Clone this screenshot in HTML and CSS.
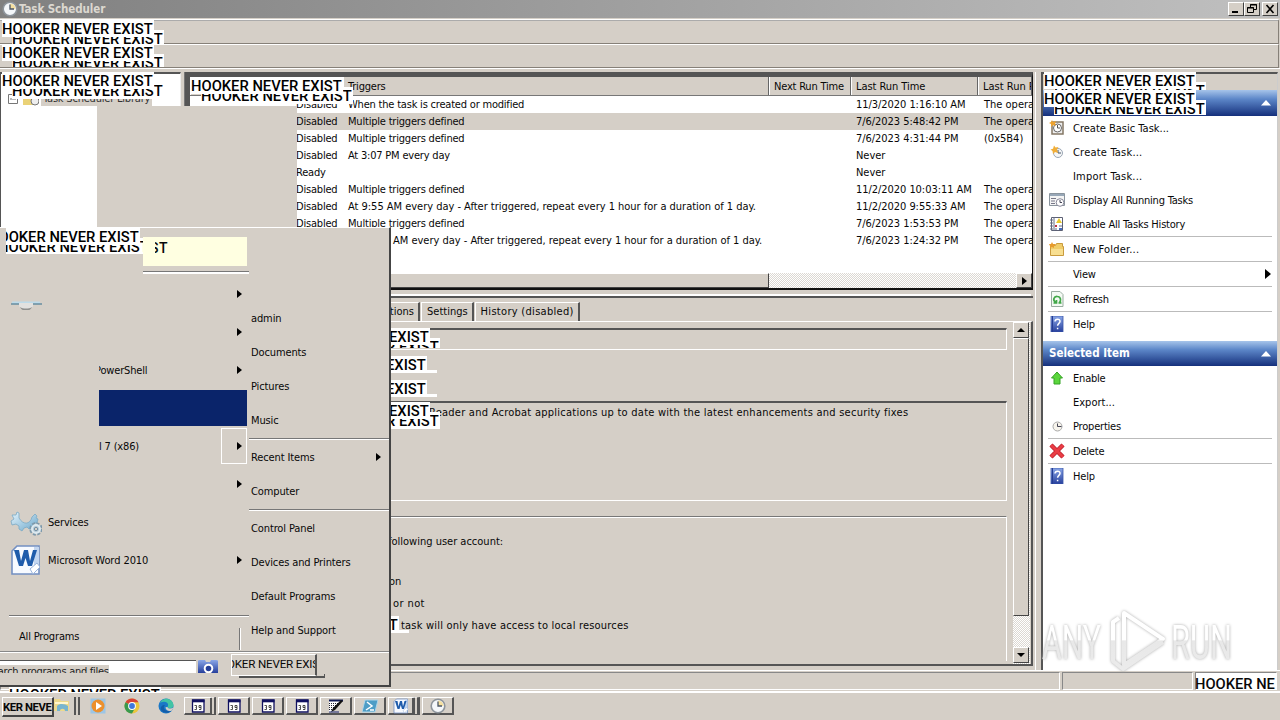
FILE: index.html
```html
<!DOCTYPE html>
<html lang="en">
<head>
<meta charset="utf-8">
<title>Task Scheduler</title>
<link rel="stylesheet" href="styles.css">
</head>
<body>
<svg class="defs" width="0" height="0">
  <defs>
    <linearGradient id="blue" x1="0" y1="0" x2="0" y2="1"><stop offset="0" stop-color="#8aa7e8"/><stop offset="1" stop-color="#263f9c"/></linearGradient>
    <linearGradient id="sky" x1="0" y1="0" x2="1" y2="1"><stop offset="0" stop-color="#e6f5fd"/><stop offset="1" stop-color="#6aa6ca"/></linearGradient>
    <symbol id="clock" viewBox="0 0 16 16"><circle cx="8" cy="8" r="6.8" fill="#f4f7fa" stroke="#8d949b" stroke-width="1.600"/><path d="M8 8V2.500A5.500 5.500 0 0 1 13.500 8z" fill="#f4dfa0"/><path d="M8 3.500V8h4" fill="none" stroke="#4b5665" stroke-width="1.300"/></symbol>
    <symbol id="help" viewBox="0 0 16 16"><path d="M2 0h12v16H2z" fill="url(#blue)" stroke="#3a55a8" stroke-width=".8"/><path d="M3.500 0v16" stroke="#243c91"/><path d="M6 5.500c.2-3.200 5.300-3 5 0-.1 1.800-2.400 2-2.400 4.200M8.600 11.700v1.600" fill="none" stroke="#fff" stroke-width="1.500"/></symbol>
    <symbol id="app" viewBox="0 0 16 16"><path d="M2.500 2h11.500v12H2.500z" fill="#fff" stroke="#101060" stroke-width="1.300"/><path d="M2 3h12.500" stroke="#101060" stroke-width="2.600"/><path d="M4.500 7.500h2v2h-1M6.500 9.500v2h-2M11 9.500H9v-2h2v4H9" fill="none" stroke="#222" stroke-width=".8"/></symbol>
    <symbol id="word" viewBox="0 0 32 32"><path d="M7 2h22v28H2V7z" fill="#f7faff" stroke="#7390c2" stroke-width="1.600"/><path d="M24 3h5v20l-5 5z" fill="#c3d6f0"/><path d="M4 6h5l2 11 3-11h4l2 11 3-11h4l-5 16h-4l-2.500-8-2.500 8H9z" fill="#1f5cab"/><path d="M20 25l7-6 3 4-7 7z" fill="#fff" stroke="#9bb5dc"/></symbol>
    <symbol id="tri" viewBox="0 0 5 8"><path d="M0 0l5 4-5 4z"/></symbol>
  </defs>
</svg>
<div class="desktop">
  <header class="titlebar">
    <svg class="i16"><use href="#clock"/></svg><span class="title">Task Scheduler</span>
    <div class="winbtns">
      <b class="wb"><svg viewBox="0 0 14 12"><path d="M3 9h6" stroke="#000" stroke-width="2"/></svg></b><b class="wb"><svg viewBox="0 0 14 12"><path d="M5.500 4V1.500h6v5H9M5 2h7M2.500 4.500h6v5h-6zM2 5h7" fill="none" stroke="#000"/></svg></b><b class="wb close"><svg viewBox="0 0 14 12"><path d="M3.500 2l7 8M10.500 2l-7 8" stroke="#000" stroke-width="1.600"/></svg></b>
    </div>
  </header>
  <div class="bar bar1"></div>
  <div class="bar"></div>

  <main class="panes">
    <section class="tree"><svg class="i16 expander" viewBox="0 0 16 16"><path d="M3.500 3.500h9v9h-9zM5 8h6" fill="#fff" stroke="#777"/></svg><svg class="i16" viewBox="0 0 16 16"><path d="M0 4h6l1 2h7v8H0z" fill="#ead277"/><circle cx="12" cy="10" r="4" fill="#eee" stroke="#777"/></svg><span class="node">Task Scheduler Library</span></section>
    <section class="center">
      <div class="list">
        <div class="row head"><span></span><span>Triggers</span><span>Next Run Time</span><span>Last Run Time</span><span>Last Run Result</span></div>
        <div class="row"><span>Disabled</span><span>When the task is created or modified</span><span></span><span>11/3/2020 1:16:10 AM</span><span>The opera</span></div>
        <div class="row sel"><span>Disabled</span><span>Multiple triggers defined</span><span></span><span>7/6/2023 5:48:42 PM</span><span>The opera</span></div>
        <div class="row"><span>Disabled</span><span>Multiple triggers defined</span><span></span><span>7/6/2023 4:31:44 PM</span><span>(0x5B4)</span></div>
        <div class="row"><span>Disabled</span><span>At 3:07 PM every day</span><span></span><span>Never</span><span></span></div>
        <div class="row"><span>Ready</span><span></span><span></span><span>Never</span><span></span></div>
        <div class="row"><span>Disabled</span><span>Multiple triggers defined</span><span></span><span>11/2/2020 10:03:11 AM</span><span>The opera</span></div>
        <div class="row"><span>Disabled</span><span class="long">At 9:55 AM every day - After triggered, repeat every 1 hour for a duration of 1 day.</span><span></span><span>11/2/2020 9:55:33 AM</span><span>The opera</span></div>
        <div class="row"><span>Disabled</span><span>Multiple triggers defined</span><span></span><span>7/6/2023 1:53:53 PM</span><span>The opera</span></div>
        <div class="row"><span></span><span class="long">At 12:24 AM every day - After triggered, repeat every 1 hour for a duration of 1 day.</span><span></span><span>7/6/2023 1:24:32 PM</span><span>The opera</span></div>
        <div class="hscroll"><i class="thumb"></i><b class="sb"><svg viewBox="0 0 14 14"><path d="M5 3l5 4-5 4z"/></svg></b></div>
      </div>
      <div class="detail">
        <div class="tabs"><span class="tab t1">Actions</span><span class="tab">Settings</span><span class="tab t3">History (disabled)</span></div>
        <div class="sheet">
          <div class="groups">
            <div class="group g1"></div>
            <div class="group g2">Reader and Acrobat applications up to date with the latest enhancements and security fixes</div>
            <div class="group g3"><p class="acct">following user account:</p><p class="on">on</p><p class="not">or not</p><p class="task">task will only have access to local resources</p></div>
          </div>
          <div class="vscroll"><b class="sb"><svg viewBox="0 0 14 14"><path d="M3 9l4-4 4 4z"/></svg></b><i class="thumb"></i><b class="sb"><svg viewBox="0 0 14 14"><path d="M3 5l4 4 4-4z"/></svg></b></div>
        </div>
      </div>
    </section>
    <aside class="actions">
      <div class="sechead first"><span></span><svg viewBox="0 0 10 6"><path d="M0 5.500L5 0l5 5.500z" fill="#fff"/></svg></div>
      <div class="act dots"><svg class="i16" viewBox="0 0 16 16"><path d="M3 2h11v12H3z" fill="#eee" stroke="#857865" stroke-width="1.500"/><circle cx="8.500" cy="8" r="4" fill="#fff" stroke="#666"/><path d="M8.500 5v3h2.500" fill="none" stroke="#555"/><path d="M3 0l1 2 3-1-1 3 1 2-3-1-2 2 0-3-2-1 2-1z" fill="#eda22e"/></svg>Create Basic Task...</div>
      <div class="act dots wider"><svg class="i16" viewBox="0 0 16 16"><circle cx="9" cy="9" r="4.500" fill="#f5f6f7" stroke="#9aa6b4"/><path d="M9 6v3h3" fill="none" stroke="#456"/><path d="M5 1.500l1.500 2 3-.5-1.500 2.500L9 9 6 8 4 10 3.500 7 1.500 5.500l2.500-.8z" fill="#f1ae37"/></svg>Create Task...</div>
      <div class="act dots wider"><i class="i16"></i>Import Task...</div>
      <div class="act"><svg class="i16" viewBox="0 0 16 16"><path d="M.5 1.500h15v12H.5z" fill="#f4f4f4" stroke="#8a949d"/><path d="M1 3h14" stroke="#98a8b8" stroke-width="2"/><path d="M2 6.500h5M2 9h4M2 11.500h4" stroke="#778"/><circle cx="11" cy="10.500" r="3.800" fill="#fff" stroke="#889"/><path d="M11 8v2.500h2" fill="none" stroke="#445"/></svg>Display All Running Tasks</div>
      <div class="act"><svg class="i16" viewBox="0 0 16 16"><path d="M2.500 1.500h11v13h-11z" fill="#fff" stroke="#5c6074"/><path d="M5 1v14M1 4h3M1 7h3M1 10h3M1 13h3M6 10h2M10 10h3M6 13h2" stroke="#626c83"/><path d="M7 7l3-5 3 5z" fill="#e8c92d"/><path d="M6 9h2v2H6z" fill="#be3545"/><path d="M10 12h3v2h-3z" fill="#456abd"/></svg>Enable All Tasks History</div>
      <hr>
      <div class="act dots wider"><svg class="i16" viewBox="0 0 16 16"><path d="M1.500 4.500h5l1-2h6v3h1v9h-13z" fill="#f0cd6a" stroke="#c99b3e"/><path d="M2 8h12v6H2z" fill="#f8df91"/><path d="M3 1l1 2 3 0-2 2 0 2-2-1-2 1V5L0 3h2z" fill="#e79b2d"/></svg>New Folder...</div>
      <hr>
      <div class="act"><i class="i16"></i>View<svg class="more" viewBox="0 0 6 10"><path d="M0 0l6 5-6 5z"/></svg></div>
      <hr>
      <div class="act"><svg class="i16" viewBox="0 0 16 16"><path d="M2.500 .5h8.500l3 3v12H2.500z" fill="#f4faf4" stroke="#9aaca1"/><path d="M4.500 12h3V9M7 11.500c-4-2-2-6.500 1.500-6 3.500.3 4 4.500 1.500 6.500M9.500 12h3" fill="none" stroke="#42a849" stroke-width="1.700"/></svg>Refresh</div>
      <hr>
      <div class="act"><svg class="i16"><use href="#help"/></svg>Help</div>
      <div class="sechead second"><span>Selected Item</span><svg viewBox="0 0 10 6"><path d="M0 5.500L5 0l5 5.500z" fill="#fff"/></svg></div>
      <div class="act"><svg class="i16" viewBox="0 0 16 16"><path d="M8 2l5.500 6H11v6H5V8H2.500z" fill="#5bd63c" stroke="#35a324"/></svg>Enable</div>
      <div class="act dots"><i class="i16"></i>Export...</div>
      <div class="act"><svg class="i16" viewBox="0 0 16 16"><circle cx="8.500" cy="8.500" r="4.500" fill="#f7f4ec" stroke="#a9a9a9"/><path d="M8.500 5.500v3h4" fill="none" stroke="#445"/></svg>Properties</div>
      <hr>
      <div class="act"><svg class="i16" viewBox="0 0 16 16"><path d="M2 2l12 12M14 2L2 14" stroke="#b8202c" stroke-width="4.500"/><path d="M2 2l12 12M14 2L2 14" stroke="#ea3d45" stroke-width="3"/></svg>Delete</div>
      <hr>
      <div class="act"><svg class="i16"><use href="#help"/></svg>Help</div>
    </aside>
  </main>

  <footer class="status"><i class="s1"></i><i class="s2"></i><i class="s3">HOOKER NE</i></footer>

  <nav class="taskbar">
    <div class="startbtn"><span>KER NEVE</span></div>
    <div class="tb explorer"><svg class="i16" viewBox="0 0 16 16"><path d="M0 2h6l1 2h8v10H0z" fill="#ecd98c"/><path d="M1 5h13v2H1z" fill="#fff7cf"/><path d="M3 9c3-3 8-2 11 0v5h-3c0-3-5-3-5 0H3z" fill="#77b5cf"/></svg></div>
    <div class="tb flat media"><svg class="i16" viewBox="0 0 16 16"><rect x=".5" y=".5" width="15" height="15" fill="#9cc5e5"/><circle cx="8" cy="8" r="6.500" fill="#ec902d"/><path d="M6 4l6 4-6 4z" fill="#fff"/></svg></div>
    <div class="tb flat"><svg class="i16" viewBox="0 0 16 16"><circle cx="8" cy="8" r="7.500" fill="#eac63e"/><path d="M8 8L1.500 4.200A7.500 7.500 0 0 1 14.500 4.200H8z" fill="#d84437"/><path d="M8 8L1.500 4.200A7.500 7.500 0 0 0 8 15.500L11 10z" fill="#38994e"/><circle cx="8" cy="8" r="3.900" fill="#fff"/><circle cx="8" cy="8" r="2.900" fill="#3f78dc"/></svg></div>
    <div class="tb flat"><svg class="i16" viewBox="0 0 16 16"><circle cx="8" cy="8" r="7.500" fill="#1a78c7"/><path d="M2 5C5-2 15 0 15.500 7c0 4-5 4-6 2 1-2 1-4-2-5-2-.5-4 0-5.500 1z" fill="#43c4a4"/><path d="M9.500 9c.5 2 4 2 5.800.500-.3 1.500-1 2.500-1.800 3.200-3 1-6-.5-6-3.500z" fill="#d5cfc7"/><path d="M7 7c-3 3 0 7 6 6-3 3-8 2-10-1-1-3 1-5 4-5z" fill="#145da8"/></svg></div>
    <div class="tb multi"><svg class="i16"><use href="#app"/></svg></div>
    <div class="tb"><svg class="i16"><use href="#app"/></svg></div>
    <div class="tb"><svg class="i16"><use href="#app"/></svg></div>
    <div class="tb"><svg class="i16"><use href="#app"/></svg></div>
    <div class="tb"><svg class="i16" viewBox="0 0 16 16"><path d="M1 2h14L3 14H1z" fill="#fff"/><path d="M1 2.500h14" stroke="#111a55" stroke-width="2"/><path d="M1 5.500h9M1 7.500h7M1 9.500h5M1 11.500h3" stroke="#223" stroke-dasharray="1 1"/><path d="M15 3L7 12l-4 2 2-4 8-8z" fill="#111"/><path d="M1 14h10" stroke="#18236c"/></svg></div>
    <div class="tb"><svg class="i16" viewBox="0 0 16 16"><path d="M3 2h13l-3 12H0z" fill="#4e9dc6" stroke="#b0d6e8"/><path d="M5 4l5 4-6 4M8 12h4" fill="none" stroke="#fff" stroke-width="1.500"/></svg></div>
    <div class="tb multi wordb"><svg class="i16"><use href="#word"/></svg></div>
    <div class="tb"><svg class="i16"><use href="#clock"/></svg></div>
  </nav>

  <div class="block"></div>
  <div class="tag a1"><i>HOOKER NEVER EXIST</i><b>HOOKER NEVER EXIST</b></div>
  <div class="tag a2"><i>HOOKER NEVER EXIST</i><b>HOOKER NEVER EXIST</b></div>
  <div class="tag a3"><i>HOOKER NEVER EXIST</i><b>HOOKER NEVER EXIST</b></div>
  <div class="tag a4"><i>HOOKER NEVER EXIST</i><b>HOOKER NEVER EXIST</b></div>
  <div class="tag a5"><i>HOOKER NEVER EXIST</i><b>HOOKER NEVER EXIST</b></div>
  <div class="tag a6"><i>HOOKER NEVER EXIST</i><b>HOOKER NEVER EXIST</b></div>
  <div class="tag d1"><i>HOOKER NEVER EXIST</i><b>HOOKER NEVER EXIST</b></div>
  <div class="tag d2"><i>HOOKER NEVER EXIST</i><b>HOOKER NEVER EXIST</b></div>
  <div class="tag d3"><i>HOOKER NEVER EXIST</i><b>HOOKER NEVER EXIST</b></div>
  <div class="tag d4"><i>HOOKER NEVER EXIST</i><b>HOOKER NEVER EXIST</b></div>
  <div class="tag d5"><i>HOOKER NEVER EXIST</i><b>HOOKER NEVER EXIST</b></div>
  <div class="tag low"><i>HOOKER NEVER EXIST</i></div>

  <svg class="mark" viewBox="0 0 200 70">
    <defs><linearGradient id="wm" gradientUnits="userSpaceOnUse" x1="0" y1="0" x2="0" y2="70"><stop offset="0" stop-color="#fff"/><stop offset=".48" stop-color="#fff"/><stop offset=".5" stop-color="#e8e8e8"/><stop offset="1" stop-color="#ececec"/></linearGradient></defs>
    <g class="glow"><text x="2" y="53" textLength="59" lengthAdjust="spacingAndGlyphs">ANY</text><text x="131" y="53" textLength="61" lengthAdjust="spacingAndGlyphs">RUN</text>
    <path d="M84 7l39 26-39 26zM79 12l-6 4v39l10 8 40-27" fill="none" stroke="url(#wm)" stroke-width="4" stroke-linejoin="round"/></g>
  </svg>

  <div class="start">
    <div class="cols">
      <div class="left">
        <div class="pinned"><div class="tag s"><i>HOOKER NEVER EXIST</i><b>HOOKER NEVER EXIST</b></div><div class="tip"><span>ST</span></div></div>
        <div class="item"><svg class="i32" viewBox="0 0 32 32"><path d="M2 24.500h28" stroke="#bddbea" stroke-width="2"/><path d="M1 26h31" stroke="#4a7d98" stroke-width="1.200"/><path d="M9 25h14v3c-2 5-12 5-14 0z" fill="#e2e1df"/><path d="M10 29c3 2 9 2 12 0-2 5-10 5-12 0z" fill="#8f8f8d"/></svg><svg class="arr"><use href="#tri"/></svg></div>
        <div class="item"><svg class="arr"><use href="#tri"/></svg></div>
        <div class="item"><span class="cut"><span>PowerShell</span></span><svg class="arr"><use href="#tri"/></svg></div>
        <div class="item"><div class="hl"></div></div>
        <div class="item"><span class="cut">l 7 (x86)</span><div class="split"></div><svg class="arr"><use href="#tri"/></svg></div>
        <div class="item"><svg class="arr"><use href="#tri"/></svg></div>
        <div class="item"><svg class="i32" viewBox="0 0 32 32"><path d="M2 9h4l1-3 2 1 0 5c4 7 11 7 13-1l3-3 2 2-1 2 2 1-1 4-3 0-1 3 0 3-4 0-2-2-3 1-2 3-3-2 0-3-3-2-4 1-1-4 3-2z" fill="url(#sky)" stroke="#7aa9c5" stroke-width=".8"/><circle cx="26" cy="23" r="5" fill="none" stroke="#7d99ab" stroke-width="3.500" stroke-dasharray="2.600 1.300"/><circle cx="26" cy="23" r="4" fill="#b8cbd6" stroke="#dce9f0" stroke-width="2"/><circle cx="26" cy="23" r="1.700" fill="#d5cfc7" stroke="#7390a5"/></svg>Services</div>
        <div class="item msword"><svg class="i32"><use href="#word"/></svg>Microsoft Word 2010<svg class="arr"><use href="#tri"/></svg></div>
        <div class="all">All Programs<i></i></div>
      </div>
      <div class="right">
        <p>admin</p><p>Documents</p><p>Pictures</p><p>Music</p><hr>
        <p>Recent Items<svg class="arr"><use href="#tri"/></svg></p><p>Computer</p><hr>
        <p>Control Panel</p><p>Devices and Printers</p><p>Default Programs</p><p>Help and Support</p>
      </div>
    </div>
    <div class="foot">
      <div class="search"><span>Search programs and files</span></div>
      <svg class="lens" viewBox="0 0 20 13"><path d="M0 1q0-1 2-1h5l1 2h4l1-2h5q2 0 2 1v12H0z" fill="url(#blue)"/><circle cx="10.500" cy="8.500" r="3.800" fill="#243e98" stroke="#fff" stroke-width="2"/></svg>
      <div class="shut"><span>HOOKER NEVER EXIST</span></div>
      <i class="shutedge"></i>
    </div>
  </div>
</div>
</body>
</html>
```
FILE: styles.css
```css
* { box-sizing: border-box; }
body { margin: 0; width: 1280px; height: 720px; overflow: hidden; font: 11px/13px "DejaVu Sans Condensed", "DejaVu Sans", sans-serif; color: #080808; background: #d5cfc7; }
p { margin: 0; }
.defs { position: absolute; }
.desktop { position: relative; width: 1280px; height: 720px; display: flex; flex-direction: column; overflow: hidden; background: #d5cfc7; }
.i16 { width: 16px; height: 16px; flex: none; }
.i32 { width: 32px; height: 32px; flex: none; }

.titlebar { height: 18px; display: flex; align-items: center; padding: 0 2px 0 2px; background: linear-gradient(90deg, #808080, #c0c0c0); }
.title { margin-left: 1px; font-weight: bold; font-size: 11.500px; letter-spacing: -.1px; color: #dcd8d0; }
.winbtns { margin-left: auto; display: flex; }
.wb { width: 16px; height: 14px; background: #d5cfc7; border: 1px solid #fff; border-right-color: #404040; border-bottom-color: #404040; display: flex; }
.wb svg { width: 14px; height: 12px; }
.close { margin-left: 2px; }
.bar { height: 24px; border-top: 1px solid #fff; border-bottom: 1px solid #868078; border-right: 1px solid #868078; margin-right: 1px; }
.bar1 { margin-top: 1px; height: 25px; border-top: 2px solid #fff; border-top-style: ridge; }

.panes { height: 603px; padding-top: 3px; display: flex; border-top: 1px solid #fff; }
.tree { width: 181px; background: #fff; border: solid #555; border-width: 2px 0 0 1px; border-right: 1px solid #eee; display: flex; align-items: flex-start; padding: 17px 0 0 4px; }
.tree .i16 { margin-right: 2px; }
.node { background: #d5cfc7; padding: 1px 2px; color: #333; letter-spacing: -.2px; }
.center { width: 852px; margin-left: 3px; border-left: 1px solid #777; display: flex; flex-direction: column; border-right: 1px solid #fff; }
.list { height: 218px; width: 848px; border: solid #555; border-width: 5px 1px 2px 5px; border-right-color: #111; border-bottom-color: #111; background: #fff; overflow: hidden; display: flex; flex-direction: column; }
.row { height: 17px; flex: none; display: grid; grid-template-columns: 153px 426px 82px 127px 54px; line-height: 17px; white-space: nowrap; letter-spacing: -.2px; }
.row span { overflow: hidden; padding-left: 5px; }
.row span:nth-child(4) { letter-spacing: -.05px; }
.row span:nth-child(5) { padding-left: 6px; letter-spacing: 0; }
.row span.long { letter-spacing: -.02px; }
.row span:first-child { padding-left: 106px; }
.row.head { height: 19px; background: #d5cfc7; border-bottom: 1px solid #777; line-height: 20px; }
.row.head span { padding-left: 4px; border-right: 1px solid #666; border-left: 1px solid #fff; }
.sel { background: #d5cfc7; }
.hscroll { margin-top: auto; height: 15px; display: flex; background: repeating-conic-gradient(#fff 0 25%, #dcd8d2 0 50%) 0 0/2px 2px; }
.thumb { background: #d5cfc7; border: 1px solid #fff; border-right-color: #444; border-bottom-color: #444; }
.hscroll .thumb { width: 579px; }
.sb { width: 16px; height: 16px; flex: none; background: #d5cfc7; border: 1px solid #fff; border-right-color: #444; border-bottom-color: #444; }
.sb svg { width: 14px; height: 14px; display: block; }
.hscroll .sb { margin-left: auto; height: 15px; }

.detail { margin-top: 6px; width: 848px; height: 370px; border-top: 2px solid #555; border-bottom: 2px solid #555; display: flex; flex-direction: column; box-shadow: 0 -4px 0 -2px #fff; }
.tabs { height: 23px; padding: 4px 0 0 178px; display: flex; }
.tab { height: 19px; line-height: 17px; border-top: 1px solid #fff; border-left: 1px solid #fff; border-right: 2px solid #555; padding: 0 4px 0 5px; margin-right: 1px; white-space: nowrap; }
.tab.t1 { width: 57px; text-align: right; }
.tab.t3 { letter-spacing: .3px; }
.sheet { flex: 1; display: flex; border-top: 1px solid #fff; border-right: 2px solid #555; }
.groups { width: 822px; padding-top: 6px; }
.group { border: 1px solid #fff; border-top: 2px solid #555; border-left: 0; }
.g1 { height: 22px; }
.g2 { margin-top: 51px; height: 100px; padding: 3px 0 0 244px; letter-spacing: .25px; white-space: nowrap; }
.g3 { margin-top: 15px; height: 145px; border-top: 1px solid #777; border-bottom: 0; padding: 18px 0 0 203px; box-shadow: inset 0 1px #fff; }
.g3 p { height: 22px; white-space: nowrap; }
.g3 .on { padding-left: 1px; margin-top: 18px; }
.g3 .not { padding-left: 5px; letter-spacing: .4px; }
.g3 .task { padding-left: 13px; letter-spacing: .2px; }
.vscroll { margin-left: 6px; width: 17px; display: flex; flex-direction: column; background: repeating-conic-gradient(#fff 0 25%, #dcd8d2 0 50%) 0 0/2px 2px; }
.vscroll .thumb { height: 278px; width: 16px; }
.vscroll .sb:last-child { margin-top: auto; margin-bottom: 1px; }

.actions { width: 237px; margin-left: 5px; border-left: 2px solid #555; border-top: 2px solid #555; border-right: 1px solid #ccc; background: linear-gradient(#d5cfc7 0 16px, #fff 16px); padding-top: 16px; }
.sechead { height: 26px; display: flex; align-items: center; justify-content: space-between; padding: 0 6px 0 6px; background: linear-gradient(#a6c4ea, #5c86c8 35%, #15307c); color: #fff; font-weight: bold; font-size: 11.500px; }
.sechead svg { width: 10px; height: 6px; }
.second { height: 25px; margin-top: 5px; }
.act { height: 24px; display: flex; align-items: center; padding-left: 6px; letter-spacing: -.2px; }
.act.dots { letter-spacing: 0; }
.act.wider { letter-spacing: .2px; }
.act .i16 { margin-right: 8px; }
.actions hr { border: 0; height: 1px; background: #bbb; margin: 0 5px; }
.more { width: 6px; height: 10px; margin: 0 6px 0 auto; }

.status { height: 22px; border-bottom: 1px solid #fff; border-top: 1px solid #fff; display: flex; gap: 2px; padding: 1px 3px 1px 0; margin-top: -1px; }
.status i { border: 1px solid #888; border-right-color: #fff; border-bottom-color: #fff; }
.s1 { width: 1060px; }
.s2 { width: 131px; }
.s3 { flex: 1; background: #fff; font: 500 14.700px/22px Roboto, sans-serif; white-space: nowrap; text-indent: -1px; }

.taskbar { flex: 1; display: flex; padding-top: 4px; border-top: 1px solid #fff; }
.startbtn { width: 52px; height: 20px; margin-left: 2px; border: 1px solid #fff; border-right: 2px solid #444; border-bottom: 2px solid #444; overflow: hidden; font: bold 11.300px/19px Roboto, sans-serif; letter-spacing: -.4px; white-space: nowrap; }
.tb { width: 32px; height: 18px; margin-right: 2px; border: 1px solid #fff; border-right: 2px solid #555; border-bottom: 2px solid #555; display: flex; justify-content: center; }
.tb.flat { border-color: transparent; }
.explorer { width: 26px; justify-content: flex-start; border: 0; border-right: 6px double #555; }
.multi { border-right: 6px double #555; }
.wordb { border-right-width: 8px; }

.tag { position: absolute; width: 162px; height: 27px; overflow: hidden; font: 500 14.750px/16px Roboto, sans-serif; white-space: nowrap; color: #000; }
.tag i, .tag b { position: absolute; width: 152px; height: 17px; left: 0; top: 0; background: #fff; font-style: normal; font-weight: 500; }
.tag i { left: 10px; top: 10px; line-height: 18px; }
.tag b { line-height: 19px; }
.a1 { left: 2px; top: 20px; height: 24px; }
.a2 { left: 2px; top: 44px; height: 23px; }
.a3 { left: 2px; top: 72px; }
.a4 { left: 191px; top: 77px; }
.a5 { left: 1044px; top: 72px; height: 18px; }
.a6 { left: 1044px; top: 90px; height: 25px; }
.d1 { left: 278px; top: 328px; height: 20px; }
.d2 { left: 275px; top: 356px; height: 17px; }
.d3 { left: 275px; top: 380px; height: 17px; }
.d4 { left: 278px; top: 402px; }
.d5 { left: 247px; top: 616px; height: 17px; }
.d2 i, .d3 i, .d5 i { top: 14px; height: 3px; line-height: 19px; }
.low { left: -1px; top: 674px; height: 18px; }
.low i { top: 12px; }
.block { position: absolute; left: 97px; top: 106px; width: 200px; height: 122px; background: #d5cfc7; }

.mark { position: absolute; left: 1040px; top: 606px; width: 200px; height: 70px; }
.mark text { font: 49px Roboto, sans-serif; fill: url(#wm); }
.glow { filter: blur(.3px) drop-shadow(0 0 1.500px #aaa); }

.start { position: absolute; left: 0; top: 227px; width: 391px; height: 460px; background: #d5cfc7; border-top: 1px solid #fff; border-right: 2px solid #444; border-bottom: 2px solid #444; letter-spacing: -.17px; }
.cols { height: 424px; display: flex; border-bottom: 1px solid #888; box-shadow: 0 1px #fff; }
.left { width: 249px; }
.pinned { height: 47px; position: relative; }
.tag.s { left: 6px; top: 0; width: 137px; height: 26px; letter-spacing: 0; }
.tag.s b { left: -18px; width: 152px; line-height: 18px; }
.tag.s i { left: -8px; width: 152px; }
.tip { position: absolute; left: 143px; top: 9px; width: 104px; height: 29px; background: #ffffe1; font: 500 14px/23px Roboto, sans-serif; }
.tip::after { content: ""; position: absolute; left: 0; top: 34px; width: 106px; height: 2px; border-top: 1px solid #777; background: #fff; }
.tip span { display: block; margin-left: 12px; width: 14px; overflow: hidden; text-indent: -5px; letter-spacing: .5px; }
.item { height: 38px; display: flex; align-items: center; padding-left: 10px; }
.item .i32 { margin-right: 6px; }
.msword { letter-spacing: -.08px; }
.arr { width: 5px; height: 8px; margin: 0 7px 0 auto; }
.cut { margin-left: 89px; width: 80px; overflow: hidden; }
.cut > span { margin-left: -4px; }
.hl { width: 148px; height: 36px; margin-left: 89px; background: #0a246a; }
.split { width: 26px; height: 36px; margin: 0 -10px 0 auto; border: 1px solid #fff; }
.split + .arr { margin-left: 0; }
.all { margin: 36px 0 0 9px; padding: 14px 0 0 10px; height: 37px; border-top: 1px solid #777; box-shadow: inset 0 1px #fff; display: flex; justify-content: space-between; }
.all i { width: 2px; height: 22px; margin: -2px 8px 0 0; border-left: 1px solid #777; background: #fff; }
.right { flex: 1; padding-top: 73px; letter-spacing: -.12px; }
.right p { height: 34px; display: flex; align-items: center; padding-left: 2px; }
.right .arr { margin-right: 8px; }
.right hr { height: 2px; margin: 1px 0 0; border: 0; border-top: 1px solid #777; background: #fff; }
.foot { display: flex; padding-top: 8px; position: relative; }
.search { width: 196px; height: 13px; overflow: hidden; background: #fff; border-top: 1px solid #555; letter-spacing: -.28px; }
.search span { display: inline-block; margin-left: -14px; margin-top: 4px; background: #d5cfc7; color: #222; }
.lens { width: 20px; height: 13px; margin-left: 2px; }
.shut { width: 86px; height: 22px; margin: -6px 0 0 13px; border: 1px solid #fff; border-right: 2px solid #555; overflow: hidden; font: 11.600px/19px Roboto, sans-serif; white-space: nowrap; }
.shut span { margin-left: -21px; }
.shutedge { position: absolute; left: 239px; top: 22px; width: 86px; height: 4px; border-right: 1px solid #555; border-bottom: 2px solid #555; }
```
